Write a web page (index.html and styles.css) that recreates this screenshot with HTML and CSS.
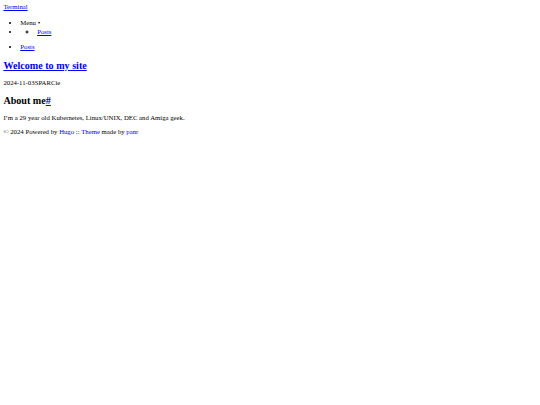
FILE: index.html
```
<!DOCTYPE html>
<html lang="en">
<head>
<meta charset="utf-8">
<title>Terminal</title>
<link rel="stylesheet" href="styles.css">
</head>
<body>
<header class="header">
  <div class="header__inner">
    <div class="header__logo"><a href="#"><div class="logo">Terminal</div></a></div>
    <ul class="menu">
      <li class="menu__trigger">Menu&nbsp;<span class="menu__caret">▾</span></li>
      <li class="menu__item"><ul class="menu__dropdown"><li><a href="#">Posts</a></li></ul></li>
    </ul>
  </div>
  <nav class="navigation-menu"><ul class="navigation-menu__inner"><li><a href="#">Posts</a></li></ul></nav>
</header>
<div class="content">
  <article class="post">
    <h1 class="post-title"><a href="#">Welcome to my site</a></h1>
    <div class="post-meta"><time class="post-date">2024-11-03</time><span class="post-author">SPARCie</span></div>
    <div class="post-content">
      <h2 id="about-me">About me<a href="#about-me">#</a></h2>
      <p>I’m a 29 year old Kubernetes, Linux/UNIX, DEC and Amiga geek.</p>
    </div>
  </article>
</div>
<footer class="footer">
  <div class="copyright"><span>© 2024 Powered by <a href="#">Hugo</a></span> <span>:: <a href="#">Theme</a> made by <a href="#">panr</a></span></div>
</footer>
</body>
</html>
```
FILE: styles.css
```
html {
  zoom: 0.421875;
}
body {
  font-family: "Liberation Serif", "Times New Roman", serif;
  font-size: 16px;
}
.menu {
  margin: 21px 0 19px;
}
.menu__caret {
  font-size: 0.55em;
  vertical-align: 0.2em;
}
.menu__item {
  padding-top: 3px;
}
.navigation-menu__inner {
  margin: 19px 0 25px;
}
.post-title {
  font-size: 1.5em;
  margin: 0.83em 0;
}
.post-content h2 {
  font-size: 1.5em;
  margin: 0.83em 0;
}
```
